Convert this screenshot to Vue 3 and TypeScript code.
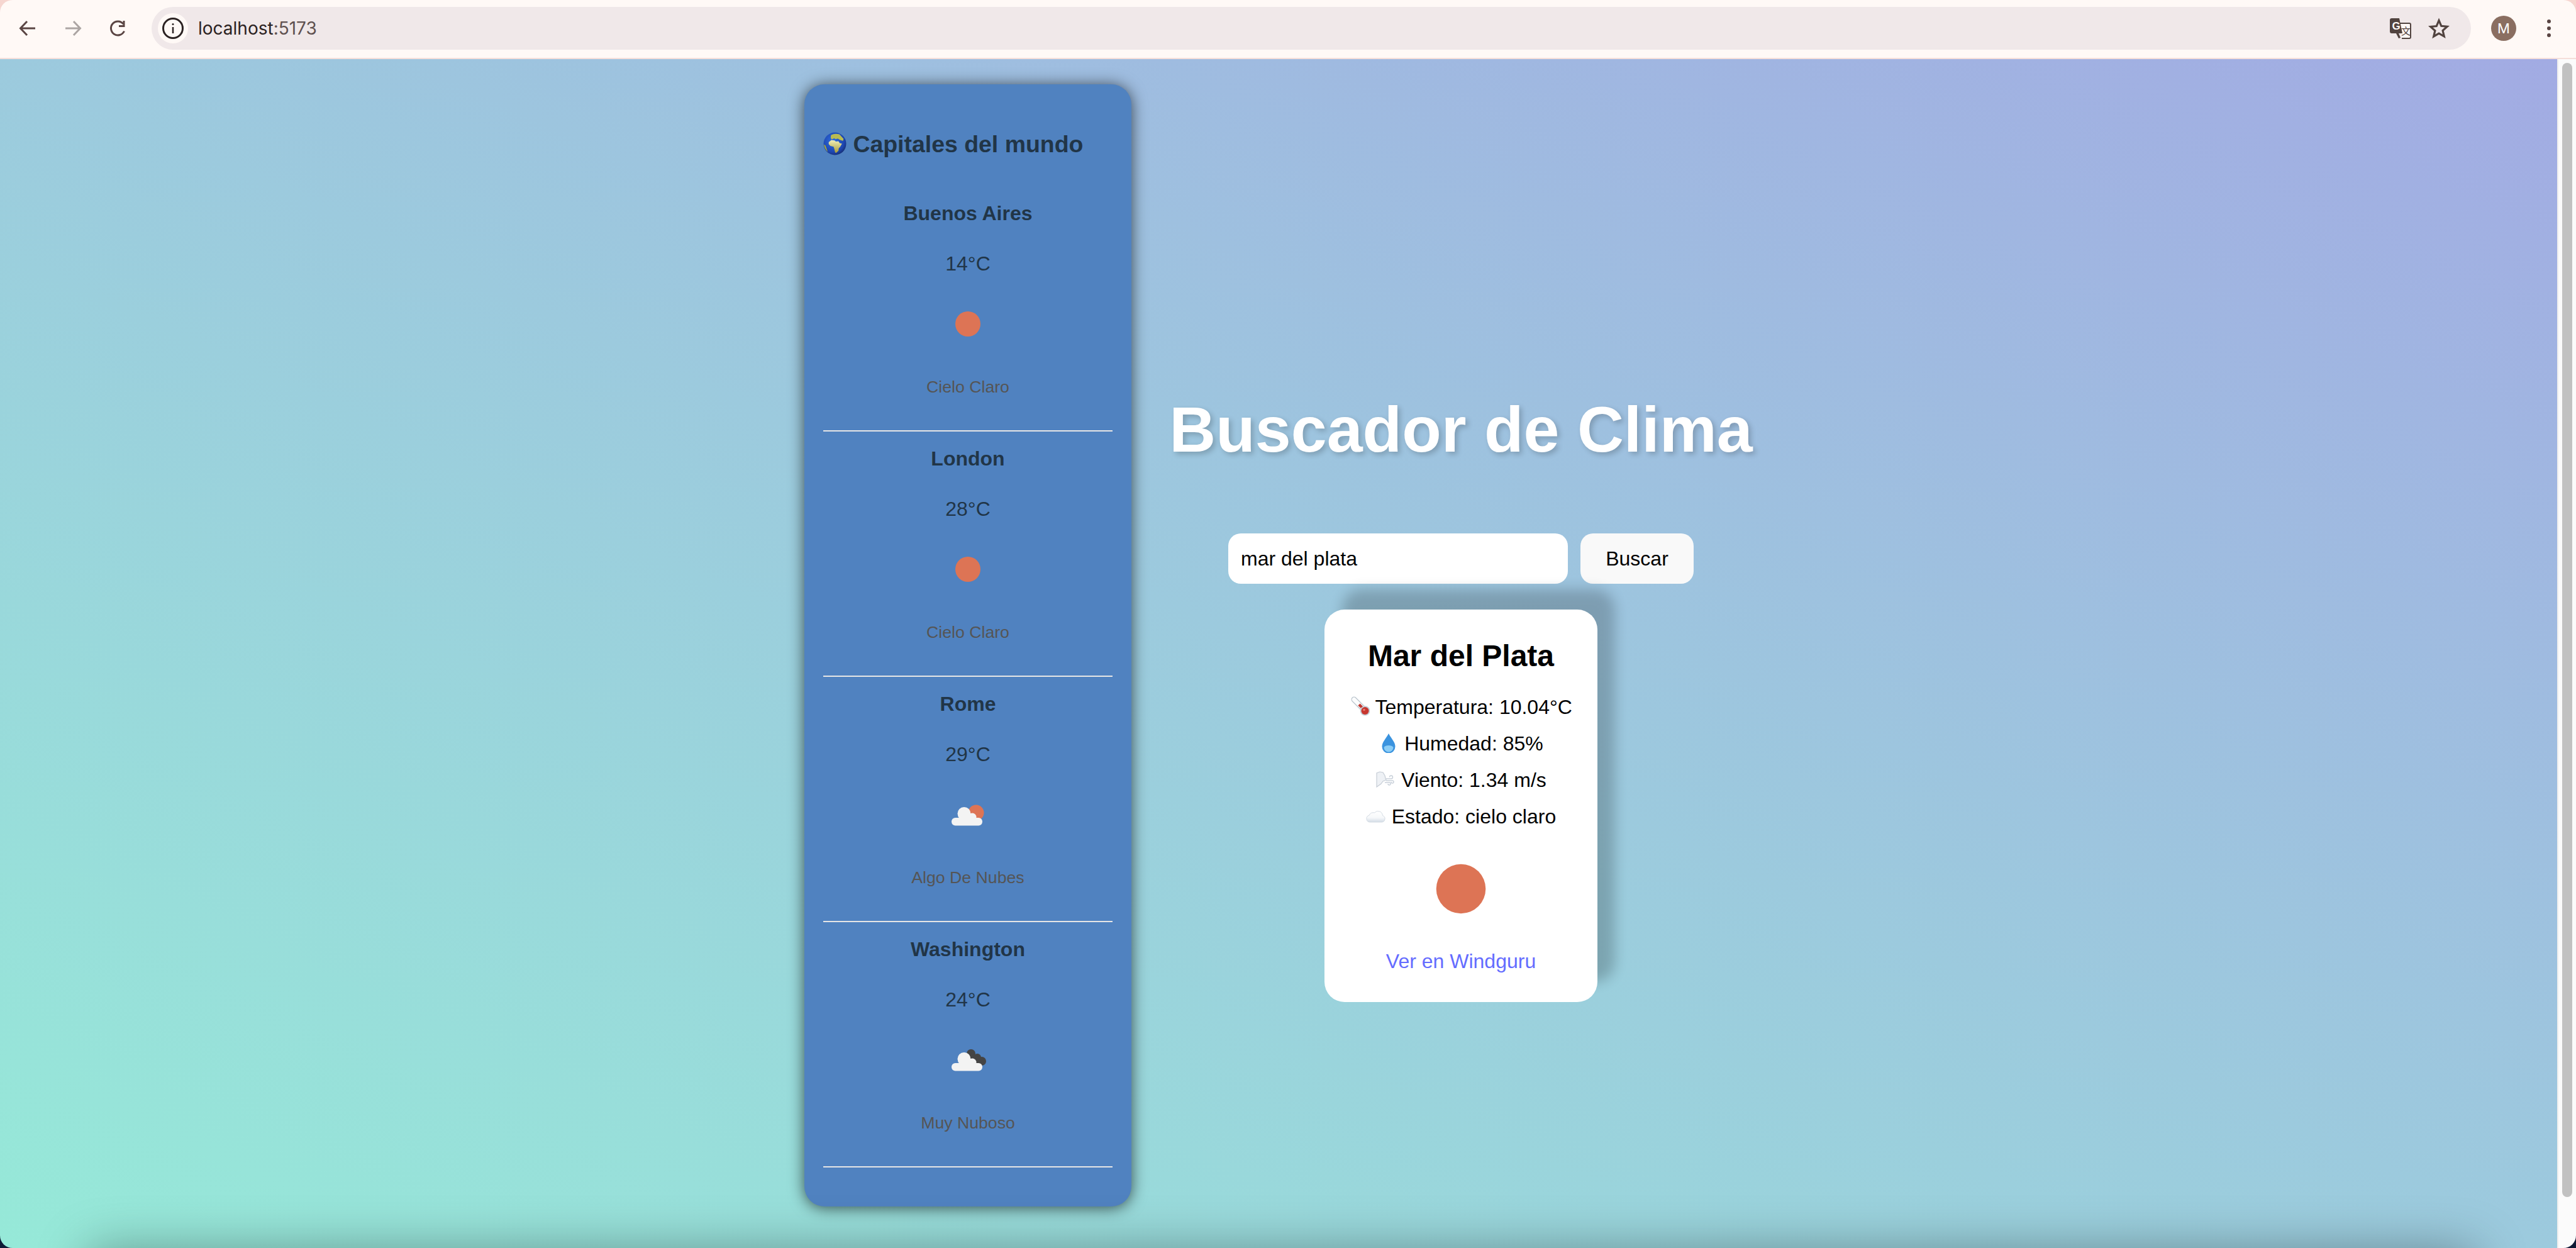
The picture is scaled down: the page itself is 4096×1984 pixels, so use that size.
<template>
  <div class="window">
    <header class="toolbar">
      <svg class="nav" width="32" height="32" viewBox="0 0 32 32" fill="none" stroke="#5a4543" stroke-width="3">
        <path d="M28 16H5M15 5 4.500 16 15 27" />
      </svg>
      <svg class="nav" width="32" height="32" viewBox="0 0 32 32" fill="none" stroke="#aca5a3" stroke-width="3">
        <path d="M4 16h23M17 5l10.500 11L17 27" />
      </svg>
      <svg class="nav" width="32" height="32" viewBox="0 0 32 32" fill="none" stroke="#5a4543" stroke-width="3">
        <path d="M25.500 20.500A11 11 0 1 1 24 9" />
        <path d="M26.500 4v10h-9.500v-3h6.500V4z" fill="#5a4543" stroke="none" />
      </svg>
      <div class="omnibox">
        <span class="chip">
          <svg width="36" height="36" viewBox="0 0 36 36" fill="none" stroke="#2b2222" stroke-width="3">
            <circle cx="18" cy="18" r="15.500" />
            <path d="M18 16v10" stroke-width="2.500" />
            <circle cx="18" cy="11.500" r="1.500" fill="#2b2222" stroke="none" />
          </svg>
        </span>
        <span class="url">localhost<span class="port">:5173</span></span>
        <svg class="translate" width="34" height="34" viewBox="0 0 34 34">
          <path d="M15 9h16a2 2 0 0 1 2 2v20a2 2 0 0 1-2 2H19" fill="#fff8f6" stroke="#51433f" stroke-width="2" />
          <path d="M3 1h12l5 24h-6l3 7-3 1-4-8H3a3 3 0 0 1-3-3V4a3 3 0 0 1 3-3z" fill="#51433f" />
          <text x="3.500" y="19" class="translate-g">G</text>
          <text x="18" y="27" class="translate-a">文</text>
        </svg>
        <svg class="star" width="34" height="34" viewBox="0 0 34 34" fill="none" stroke="#51433f" stroke-width="3.200" stroke-linejoin="miter">
          <path d="M17 4.500l3.800 8.800 9.500.9-7.200 6.300 2.200 9.300L17 25.100 8.700 30l2.200-9.300-7.200-6.300 9.500-.9z" />
        </svg>
      </div>
      <span class="avatar">M</span>
      <span class="kebab"><i></i><i></i><i></i></span>
    </header>

    <div class="viewport">
      <div class="page">
        <div class="layout">
          <aside class="sidebar">
            <h3 class="sidebar-title">
              <svg class="emoji" width="37" height="37" viewBox="0 0 36 36">
                <defs>
                  <radialGradient id="sea" cx="0.42" cy="0.38" r="0.68">
                    <stop offset="0" stop-color="#2f6fe0" />
                    <stop offset="0.72" stop-color="#1d46b0" />
                    <stop offset="1" stop-color="#142a6a" />
                  </radialGradient>
                  <linearGradient id="land" x1="0" y1="0" x2="0" y2="1">
                    <stop offset="0" stop-color="#f0eeb8" />
                    <stop offset="1" stop-color="#a89c38" />
                  </linearGradient>
                </defs>
                <circle cx="18" cy="18" r="17.500" fill="url(#sea)" />
                <path d="M12 4.500q6-3 13-1l6.500 7-1 3-5-1.500-3-2-3.500 1-2-1.500-4 2-1.500-3z" fill="#b9bb52" />
                <path d="M8.500 15.500l4-3 5 .5 2 1.500 4-.5 2 3 3.500 1-3 5-2 2-.5 4-3.500 3-1.500-.5-1.500-6-1-3-5-1-2.500-3z" fill="url(#land)" />
                <path d="M1 19l2.500 2 1.500 4 2 6q-5-5-6-12z" fill="#a2a842" />
              </svg>
              Capitales del mundo
            </h3>
            <section v-for="city in capitals" :key="city.name" class="capital">
              <h4 class="capital-name">{{ city.name }}</h4>
              <p class="capital-temp">{{ city.temp }}°C</p>
              <svg class="capital-icon" width="100" height="100" viewBox="0 0 100 100">
                <circle v-if="city.icon === 'sun'" cx="50" cy="50" r="20" fill="#dd7455" />
                <template v-else>
                  <circle v-if="city.icon === 'few'" cx="63" cy="47" r="12.500" fill="#dd7455" />
                  <g v-else fill="#444">
                    <circle cx="55" cy="40" r="7" />
                    <circle cx="65" cy="46" r="6" />
                    <circle cx="72" cy="52" r="7" />
                    <path d="M52 38l18 8 5 10-12 4-14-14z" />
                  </g>
                  <g fill="#f3f3f3">
                    <rect x="24" y="55" width="49" height="12.500" rx="6" />
                    <circle cx="44" cy="48.500" r="10.500" />
                    <circle cx="57" cy="54" r="6.500" />
                  </g>
                </template>
              </svg>
              <p class="capital-desc">{{ city.desc }}</p>
              <hr class="capital-rule" />
            </section>
          </aside>

          <main class="main">
            <h1 class="heading">Buscador de Clima</h1>
            <form class="search" @submit.prevent>
              <input v-model="query" class="search-input" type="text" />
              <button class="search-button" type="submit">Buscar</button>
            </form>
            <article class="card">
              <h2 class="card-title">Mar del Plata</h2>
              <p v-for="row in rows" :key="row.icon" class="card-row">
                <svg class="row-icon" width="32" height="32" viewBox="0 0 32 32">
                  <g v-if="row.icon === 'thermo'">
                    <path d="M7 5l17 17" stroke="#b9c4cc" stroke-width="9" stroke-linecap="round" />
                    <path d="M7 5l17 17" stroke="#fbfcfd" stroke-width="6.500" stroke-linecap="round" />
                    <path d="M15 13l10 10" stroke="#c23a32" stroke-width="4.500" />
                    <circle cx="24.500" cy="23" r="7.800" fill="#c3ced6" />
                    <circle cx="24.500" cy="23" r="6" fill="#c7362f" />
                    <circle cx="23" cy="21.500" r="1.800" fill="#ea7c72" />
                  </g>
                  <g v-else-if="row.icon === 'drop'">
                    <path d="M16 1C13 8 5.500 14 5.500 22a10.500 10.500 0 0 0 21 0C26.500 14 19 8 16 1z" fill="#3a93df" />
                    <path d="M8.500 23a7.500 7.500 0 0 0 15 0c-2-4-13-4-15 0z" fill="#8bcdf6" />
                  </g>
                  <g v-else-if="row.icon === 'wind'">
                    <path d="M2 28V6l5-2 5 1 3 5 1 4 1 3-5 2-3 4z" fill="#eef1f5" stroke="#c6cdd6" stroke-width="1.200" />
                    <path d="M17 15h8a2.500 2.500 0 1 0-2.500-2.500M17 18h10a2 2 0 1 1-2 2M15 21h7a2 2 0 1 1-2 2" fill="none" stroke="#c9d1da" stroke-width="1.400" />
                  </g>
                  <g v-else>
                    <defs>
                      <linearGradient id="puff" x1="0" y1="0" x2="0" y2="1">
                        <stop offset="0" stop-color="#ffffff" />
                        <stop offset="0.6" stop-color="#f6f8fa" />
                        <stop offset="1" stop-color="#d3dce6" />
                      </linearGradient>
                    </defs>
                    <path d="M6 26a5.500 5.500 0 0 1-1-10.800 7 7 0 0 1 8.500-4.200 7.500 7.500 0 0 1 13 4.500A5.500 5.500 0 0 1 26 26z" fill="url(#puff)" stroke="#d5dce4" stroke-width="1" />
                  </g>
                </svg>
                {{ row.text }}
              </p>
              <svg class="card-icon" width="160" height="160" viewBox="0 0 160 160">
                <circle cx="80" cy="80" r="39.300" fill="#dd7455" />
              </svg>
              <a class="card-link" href="#">Ver en Windguru</a>
            </article>
          </main>
        </div>
        <div class="fold"></div>
      </div>
      <div class="scrollbar"><div class="thumb"></div></div>
    </div>
  </div>
</template>

<script setup lang="ts">
import { ref } from "vue";

type CityIcon = "sun" | "few" | "broken";

const query = ref<string>("mar del plata");

const capitals: { name: string; temp: number; icon: CityIcon; desc: string }[] = [
  { name: "Buenos Aires", temp: 14, icon: "sun", desc: "Cielo Claro" },
  { name: "London", temp: 28, icon: "sun", desc: "Cielo Claro" },
  { name: "Rome", temp: 29, icon: "few", desc: "Algo De Nubes" },
  { name: "Washington", temp: 24, icon: "broken", desc: "Muy Nuboso" },
];

const rows = [
  { icon: "thermo", text: "Temperatura: 10.04°C" },
  { icon: "drop", text: "Humedad: 85%" },
  { icon: "wind", text: "Viento: 1.34 m/s" },
  { icon: "cloud", text: "Estado: cielo claro" },
];
</script>

<style>
html,
body {
  margin: 0;
  height: 100%;
  overflow: hidden;
  background: linear-gradient(#f6d6d0 0 50%, #0e1a35 50%);
}
</style>

<style scoped>
.window {
  display: flex;
  flex-direction: column;
  width: 4096px;
  height: 1984px;
  border-radius: 20px;
  overflow: hidden;
  font-family: "Liberation Sans", Arial, sans-serif;
  color: #000;
}

/* browser chrome */
.toolbar {
  flex: none;
  display: flex;
  align-items: center;
  box-sizing: border-box;
  height: 94px;
  padding: 0 28px 2px 28px;
  background: #fff9f6;
  border-bottom: 2px solid #f5dfda;
}
.nav {
  flex: none;
  margin-right: 40px;
}
.nav:nth-child(3) {
  margin-right: 37px;
}
.omnibox {
  flex: none;
  display: flex;
  align-items: center;
  box-sizing: border-box;
  width: 3688px;
  height: 68px;
  padding: 0 12px 0 10px;
  border-radius: 34px;
  background: #f0e8e9;
}
.chip {
  display: flex;
  align-items: center;
  justify-content: center;
  width: 48px;
  height: 48px;
  border-radius: 50%;
  background: #fff9f6;
}
.url {
  flex: 1;
  margin-left: 16px;
  font-family: Inter, "Liberation Sans", sans-serif;
  font-size: 28px;
  color: #2b2222;
}
.port {
  color: #5f5150;
}
.translate {
  flex: none;
  margin-right: 27px;
}
.translate-g {
  font-family: "Liberation Sans", sans-serif;
  font-weight: 700;
  font-size: 17px;
  fill: #fff9f6;
}
.translate-a {
  font-family: "Noto Sans CJK SC", sans-serif;
  font-size: 15px;
  fill: #51433f;
}
.star {
  flex: none;
  margin-right: 22px;
}
.avatar {
  flex: none;
  display: flex;
  align-items: center;
  justify-content: center;
  width: 40px;
  height: 40px;
  margin-left: 32px;
  border-radius: 50%;
  background: #8a6e61;
  color: #fff;
  font-family: Inter, "Liberation Sans", sans-serif;
  font-size: 22px;
}
.kebab {
  flex: none;
  display: flex;
  flex-direction: column;
  gap: 5px;
  margin-left: 49px;
}
.kebab i {
  display: block;
  width: 6px;
  height: 6px;
  border-radius: 50%;
  background: #5a4543;
}

/* page */
.viewport {
  flex: 1;
  display: flex;
  min-height: 0;
}
.page {
  position: relative;
  flex: 1;
  overflow: hidden;
  background: linear-gradient(to top right, #96e9d8, #a2abe3);
}
.fold {
  position: absolute;
  left: 140px;
  right: 130px;
  top: calc(100% + 4px);
  height: 100px;
  box-shadow: 0 0 80px rgba(0, 0, 0, 0.35);
}
.scrollbar {
  flex: none;
  box-sizing: border-box;
  width: 30px;
  padding: 6px 6px 0 6px;
  background: #fbfbfb;
  border-left: 2px solid #eeeeee;
}
.thumb {
  width: 16px;
  height: 1803px;
  border-radius: 8px;
  background: #c1c1c1;
}

.layout {
  display: flex;
  justify-content: center;
  align-items: flex-start;
  gap: 60px;
  padding-top: 40px;
}

/* sidebar */
.sidebar {
  flex: none;
  box-sizing: border-box;
  width: 520px;
  height: 1784px;
  padding: 74px 30px 0;
  border-radius: 32px;
  background: #5082c0;
  color: #213547;
  box-shadow: 0 2px 24px rgba(0, 0, 0, 0.65);
}
.sidebar-title {
  margin: 0 0 70px;
  font-size: 37.44px;
  font-weight: 700;
  white-space: nowrap;
}
.emoji {
  vertical-align: -5px;
}
.capital {
  text-align: center;
}
.capital-name {
  margin: 0;
  font-size: 32px;
  font-weight: 700;
}
.capital-temp {
  margin: 43px 0 27px;
  font-size: 32px;
}
.capital-icon {
  display: block;
  margin: 0 auto;
}
.capital-desc {
  margin: 35px 0 53px;
  font-size: 26.67px;
  color: #555;
}
.capital-rule {
  height: 2px;
  margin: 0 0 25px;
  border: 0;
  background: #e6e6e6;
}

/* search column */
.main {
  flex: none;
  display: flex;
  flex-direction: column;
  align-items: center;
  width: 928px;
  padding-top: 490px;
}
.heading {
  margin: 0 0 106px;
  font-size: 102.4px;
  font-weight: 700;
  color: #fff;
  white-space: nowrap;
  text-shadow: 4px 4px 8px rgba(0, 0, 0, 0.2);
}
.search {
  display: flex;
  gap: 20px;
  margin-bottom: 41px;
}
.search-input {
  box-sizing: border-box;
  width: 540px;
  height: 80px;
  padding: 0 20px;
  border: 0;
  border-radius: 20px;
  outline: 0;
  background: #fff;
  color: #000;
  font-family: inherit;
  font-size: 32px;
}
.search-button {
  box-sizing: border-box;
  width: 180px;
  height: 80px;
  border: 0;
  border-radius: 20px;
  background: #f9f9f9;
  color: #000;
  font-family: inherit;
  font-size: 32px;
}

/* result card */
.card {
  box-sizing: border-box;
  width: 434px;
  padding: 46px 0 46px;
  border-radius: 32px;
  background: #fff;
  text-align: center;
  box-shadow: 28px -32px 20px rgba(0, 0, 0, 0.2);
}
.card-title {
  margin: 0 0 36px;
  font-size: 48px;
  font-weight: 700;
}
.card-row {
  margin: 0 0 21px;
  font-size: 32px;
  white-space: nowrap;
}
.row-icon {
  vertical-align: -4px;
}
.card-icon {
  display: block;
  margin: -5px auto 17px;
}
.card-link {
  font-size: 32px;
  color: #646cff;
  text-decoration: none;
}
</style>
